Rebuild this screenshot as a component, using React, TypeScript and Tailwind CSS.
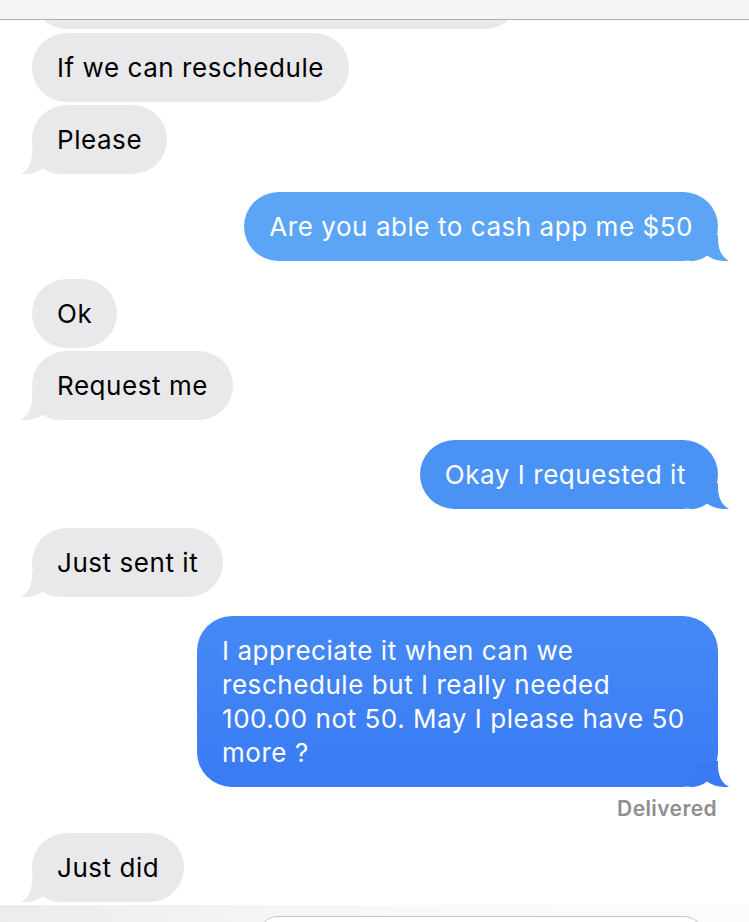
import React from "react";

const TAIL = "M0 0 H29 V4 C29 15 33 22 40 26 C33 26.5 24 25 18 20.5 C14 24 8 26 0 26 Z";

function Tail({ color, side }: { color: string; side: "left" | "right" }) {
  return (
    <svg
      width="40"
      height="26"
      viewBox="0 0 40 26"
      className={
        side === "right"
          ? "absolute bottom-0 right-[-11px]"
          : "absolute bottom-0 left-[-11px] -scale-x-100"
      }
    >
      <path d={TAIL} fill={color} />
    </svg>
  );
}

function Received({
  children,
  tail,
  className = "",
}: {
  children: React.ReactNode;
  tail?: boolean;
  className?: string;
}) {
  return (
    <div className={`flex justify-start pl-[32px] ${className}`}>
      <div className="relative rounded-[35px] bg-[#e9e9eb] px-[25px] py-[17.5px] text-[26px] leading-[34px] tracking-[0.55px] text-black">
        <span className="relative z-10">{children}</span>
        {tail && <Tail color="#e9e9eb" side="left" />}
      </div>
    </div>
  );
}

function Sent({
  children,
  bg,
  tailColor,
  className = "",
  bubbleClass = "pl-[25px] pr-[25px]",
}: {
  children: React.ReactNode;
  bg: string;
  tailColor: string;
  className?: string;
  bubbleClass?: string;
}) {
  return (
    <div className={`flex justify-end pr-[31px] ${className}`}>
      <div
        className={`relative rounded-[35px] py-[17.5px] text-[26px] leading-[34px] tracking-[0.55px] text-white ${bubbleClass} ${bg}`}
      >
        <span className="relative z-10">{children}</span>
        <Tail color={tailColor} side="right" />
      </div>
    </div>
  );
}

export default function App() {
  return (
    <div
      className="flex h-[922px] w-[749px] flex-col overflow-hidden bg-white"
      style={{ fontFamily: "Inter, 'Noto Sans', sans-serif" }}
    >
      <div className="h-[20px] shrink-0 border-b border-[#b0b0b2] bg-[#f4f4f6]" />
      <div className="flex flex-1 flex-col overflow-hidden">
        <div className="mt-[-60px] flex justify-start pl-[32px]">
          <div className="h-[69px] w-[488px] rounded-[35px] bg-[#e9e9eb]" />
        </div>
        <Received className="mt-[4px]">If we can reschedule</Received>
        <Received className="mt-[3px]" tail>
          Please
        </Received>
        <Sent className="mt-[18px]" bg="bg-[#5ca5f6]" tailColor="#5ca5f6">
          Are you able to cash app me $50
        </Sent>
        <Received className="mt-[18px]">Ok</Received>
        <Received className="mt-[3px]" tail>
          Request me
        </Received>
        <Sent
          className="mt-[20px]"
          bg="bg-[#4b92f5]"
          tailColor="#4b92f5"
          bubbleClass="pl-[25px] pr-[32px]"
        >
          Okay I requested it
        </Sent>
        <Received className="mt-[19px]" tail>
          Just sent it
        </Received>
        <Sent
          className="mt-[19px]"
          bg="bg-gradient-to-b from-[#4589f5] to-[#3a7bf4]"
          tailColor="#3a7bf4"
          bubbleClass="w-[521px] pl-[25px] pr-[25px]"
        >
          I appreciate it when can we
          <br />
          reschedule but I really needed
          <br />
          100.00 not 50. May I please have 50
          <br />
          more ?
        </Sent>
        <div className="mt-[10px] pr-[32px] text-right text-[21px] font-semibold leading-[24px] tracking-[0.4px] text-[#8e8e93]">
          Delivered
        </div>
        <Received className="mt-[12px]" tail>
          Just did
        </Received>
      </div>
      <div className="h-[17px] shrink-0 overflow-hidden bg-gradient-to-r from-[#ececec] via-[#f8f8f8] to-[#fbfbfb]">
        <div className="ml-[258px] mt-[11px] h-[40px] w-[446px] rounded-[20px] border border-[#c4c4c8] bg-white" />
      </div>
    </div>
  );
}
